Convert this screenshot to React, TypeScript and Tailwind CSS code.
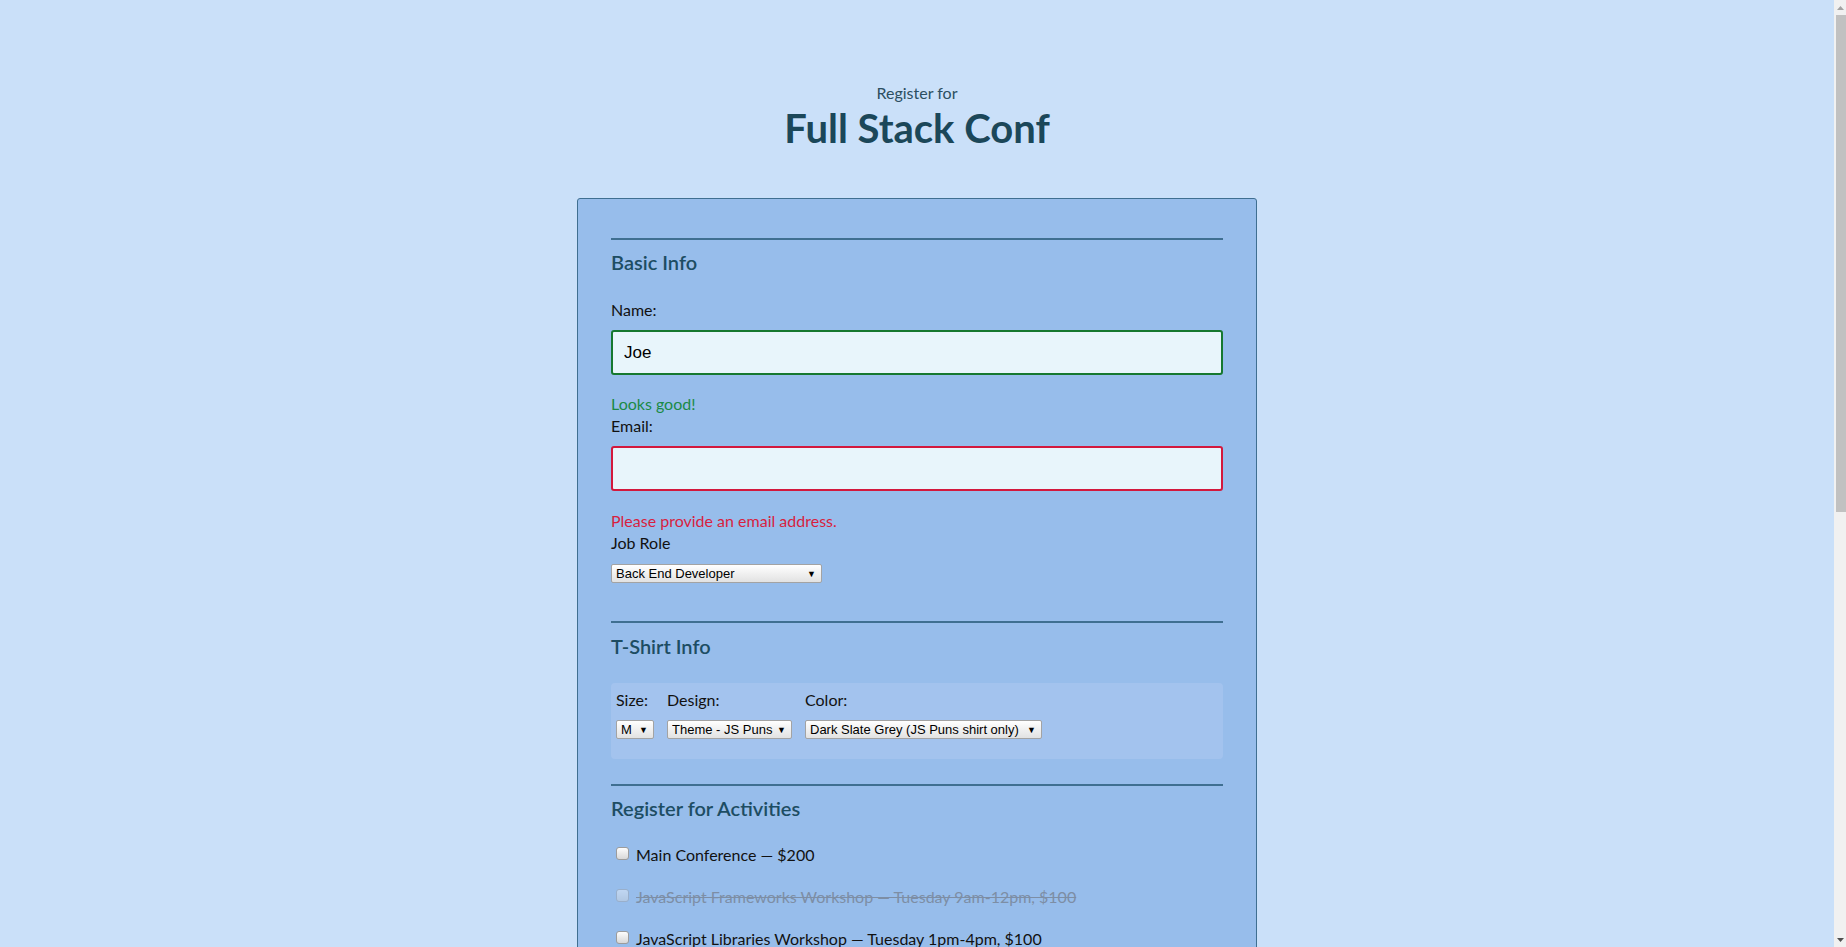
import React, { useState } from 'react';

type Activity = {
  id: string;
  label: string;
  time?: string;
  cost: number;
};

const activities: Activity[] = [
  { id: 'all', label: 'Main Conference — $200', cost: 200 },
  { id: 'js-frameworks', label: 'JavaScript Frameworks Workshop — Tuesday 9am-12pm, $100', time: 'tue-am', cost: 100 },
  { id: 'js-libs', label: 'JavaScript Libraries Workshop — Tuesday 1pm-4pm, $100', time: 'tue-pm', cost: 100 },
  { id: 'express', label: 'Express Workshop — Tuesday 9am-12pm, $100', time: 'tue-am', cost: 100 },
  { id: 'node', label: 'Node.js Workshop — Tuesday 1pm-4pm, $100', time: 'tue-pm', cost: 100 },
  { id: 'build-tools', label: 'Build tools Workshop — Wednesday 9am-12pm, $100', time: 'wed-am', cost: 100 },
  { id: 'npm', label: 'npm Workshop — Wednesday 1pm-4pm, $100', time: 'wed-pm', cost: 100 },
];

const selectClass =
  "block h-[19px] w-full appearance-none rounded-[2px] border border-[#a3a3a3] bg-linear-to-b from-white to-[#e2e2e2] pl-[4px] pr-[16px] font-['Liberation_Sans',Arial,sans-serif] text-[13px] leading-[17px] text-black outline-none";

const NativeSelect: React.FC<{
  className: string;
  value: string;
  options: string[];
  onChange: (v: string) => void;
}> = ({ className, value, options, onChange }) => (
  <div className={`relative ${className}`}>
    <select value={value} onChange={(e) => onChange(e.target.value)} className={selectClass}>
      {options.map((o) => (
        <option key={o} value={o}>
          {o}
        </option>
      ))}
    </select>
    <span className="pointer-events-none absolute inset-y-0 right-[6px] flex items-center text-[9px] text-black">▼</span>
  </div>
);

const Rule = () => <div className="h-[2px] bg-[#3f6f91]" />;

const Heading: React.FC<{ children: React.ReactNode; className?: string }> = ({ children, className = '' }) => (
  <h2 className={`text-[20px] font-semibold leading-[24px] text-[#1d4d63] ${className}`}>{children}</h2>
);

// classic window scrollbar, the page scrolls inside <main>
const ScrollTrack = () => (
  <aside className="flex w-[12px] shrink-0 flex-col bg-[#f1f1f1]">
    <div className="flex h-[15px] items-center justify-center">
      <svg width="7" height="4" viewBox="0 0 7 4">
        <path d="M0 4 L3.5 0 L7 4 Z" fill="#a3a3a3" />
      </svg>
    </div>
    <div className="ml-[2px] h-[497px] bg-[#c1c1c1]" />
    <div className="flex-1" />
    <div className="flex h-[15px] items-center justify-center">
      <svg width="7" height="4" viewBox="0 0 7 4">
        <path d="M0 0 L7 0 L3.5 4 Z" fill="#505050" />
      </svg>
    </div>
  </aside>
);

export default function App() {
  const [name, setName] = useState('Joe');
  const [email, setEmail] = useState('');
  const [role, setRole] = useState('Back End Developer');
  const [size, setSize] = useState('M');
  const [design, setDesign] = useState('Theme - JS Puns');
  const [color, setColor] = useState('Dark Slate Grey (JS Puns shirt only)');
  const [checked, setChecked] = useState<string[]>(['express']);
  const [payment, setPayment] = useState('Credit Card');
  const [month, setMonth] = useState('1 - January');
  const [year, setYear] = useState('2024');

  const toggle = (id: string) => {
    setChecked((prev) => (prev.includes(id) ? prev.filter((x) => x !== id) : [...prev, id]));
  };

  // a workshop is blocked when another one at the same time is picked
  const isDisabled = (a: Activity) =>
    !!a.time && activities.some((b) => b.id !== a.id && b.time === a.time && checked.includes(b.id));

  const total = activities.filter((a) => checked.includes(a.id)).reduce((s, a) => s + a.cost, 0);

  const inputBase =
    "mt-[9px] block h-[45px] w-full rounded-[3px] border-2 bg-[#e8f5fb] px-[11px] font-['Liberation_Sans',Arial,sans-serif] text-[17px] text-black outline-none";

  return (
    <div className="flex h-screen bg-[#cae0f9] font-[Lato,'Noto_Sans',sans-serif] text-[16px] text-[#111]">
      <main className="flex-1 overflow-y-auto">
        <header className="pt-[82px] text-center">
          <p className="text-[16px] leading-[22px] text-[#2c4f61]">Register for</p>
          <h1 className="text-[40px] font-bold leading-[48px] text-[#1b4759]">Full Stack Conf</h1>
        </header>

        <form
          onSubmit={(e) => e.preventDefault()}
          className="mx-auto mb-[160px] mt-[46px] w-[680px] rounded-[3px] border border-[#3f6f91] bg-[#97bdeb] px-[33px] pb-[40px] pt-[39px]"
        >
          {/* Basic info */}
          <section>
            <Rule />
            <Heading className="mt-[10px]">Basic Info</Heading>
            <label className="mt-[25px] block leading-[22px]">Name:</label>
            <input value={name} onChange={(e) => setName(e.target.value)} className={`${inputBase} border-[#16782f]`} />
            <p className="mt-[18px] leading-[22px] text-[#1b8a47]">Looks good!</p>
            <label className="block leading-[22px]">Email:</label>
            <input value={email} onChange={(e) => setEmail(e.target.value)} className={`${inputBase} border-[#d3183c]`} />
            <p className="mt-[19px] leading-[22px] text-[#d71f3f]">Please provide an email address.</p>
            <label className="block leading-[22px]">Job Role</label>
            <NativeSelect
              className="mt-[10px] w-[211px]"
              value={role}
              onChange={setRole}
              options={['Full Stack JavaScript Developer', 'Front End Developer', 'Back End Developer', 'Designer', 'Student', 'Other']}
            />
          </section>

          {/* T-shirt */}
          <section className="mt-[38px]">
            <Rule />
            <Heading className="mt-[11px]">T-Shirt Info</Heading>
            <div className="mt-[25px] flex gap-[13px] rounded-[4px] bg-[#a3c3ee] pb-[20px] pl-[5px] pt-[6px]">
              <div>
                <label className="block leading-[22px]">Size:</label>
                <NativeSelect className="mt-[9px] w-[38px]" value={size} onChange={setSize} options={['S', 'M', 'L', 'XL']} />
              </div>
              <div>
                <label className="block leading-[22px]">Design:</label>
                <NativeSelect
                  className="mt-[9px] w-[125px]"
                  value={design}
                  onChange={setDesign}
                  options={['Theme - JS Puns', 'Theme - I ♥ JS']}
                />
              </div>
              <div>
                <label className="block leading-[22px]">Color:</label>
                <NativeSelect
                  className="mt-[9px] w-[237px]"
                  value={color}
                  onChange={setColor}
                  options={['Cornflower Blue (JS Puns shirt only)', 'Dark Slate Grey (JS Puns shirt only)', 'Gold (JS Puns shirt only)']}
                />
              </div>
            </div>
          </section>

          {/* Activities */}
          <section className="mt-[25px]">
            <Rule />
            <Heading className="mt-[10px]">Register for Activities</Heading>
            <div className="mt-[24px] flex flex-col gap-[20px]">
              {activities.map((a) => {
                const disabled = isDisabled(a);
                return (
                  <label
                    key={a.id}
                    className={`flex items-center leading-[22px] ${disabled ? 'text-[#7d8ea5] line-through' : ''}`}
                  >
                    <input
                      type="checkbox"
                      disabled={disabled}
                      checked={checked.includes(a.id)}
                      onChange={() => toggle(a.id)}
                      className="mb-[3px] ml-[5px] mr-[7px] h-[13px] w-[13px] shrink-0 appearance-none rounded-[3px] border border-[#9c9c9c] bg-linear-to-b from-[#fdfdfd] to-[#d8d8d8] checked:border-[#2f5f80] checked:from-[#5c8bb0] checked:to-[#2f5f80] disabled:opacity-40"
                    />
                    {a.label}
                  </label>
                );
              })}
            </div>
            <p className="mt-[20px] leading-[22px]">Total: ${total}</p>
          </section>

          {/* Payment */}
          <section className="mt-[38px]">
            <Rule />
            <Heading className="mt-[10px]">Payment Info</Heading>
            <div className="mt-[26px] flex items-center gap-[10px]">
              <label className="leading-[22px]">I'm going to pay with:</label>
              <NativeSelect
                className="w-[160px]"
                value={payment}
                onChange={setPayment}
                options={['Select Payment Method', 'Credit Card', 'PayPal', 'Bitcoin']}
              />
            </div>
            <div className="mt-[25px] grid grid-cols-[1fr_150px_110px] gap-[14px]">
              <div>
                <label className="block leading-[22px]">Card Number:</label>
                <input className={`${inputBase} border-[#3f6f91]`} />
              </div>
              <div>
                <label className="block leading-[22px]">Zip Code:</label>
                <input className={`${inputBase} border-[#3f6f91]`} />
              </div>
              <div>
                <label className="block leading-[22px]">CVV:</label>
                <input className={`${inputBase} border-[#3f6f91]`} />
              </div>
            </div>
            <label className="mt-[20px] block leading-[22px]">Expiration Date:</label>
            <div className="mt-[9px] flex gap-[14px]">
              <NativeSelect
                className="w-[120px]"
                value={month}
                onChange={setMonth}
                options={['1 - January', '2 - February', '3 - March', '4 - April', '5 - May', '6 - June']}
              />
              <NativeSelect className="w-[60px]" value={year} onChange={setYear} options={['2024', '2025', '2026', '2027']} />
            </div>
          </section>

          <button
            type="submit"
            className="mt-[40px] h-[50px] w-full rounded-[3px] bg-[#1d4d63] text-[18px] font-bold text-white"
          >
            Register
          </button>
        </form>
      </main>
      <ScrollTrack />
    </div>
  );
}
